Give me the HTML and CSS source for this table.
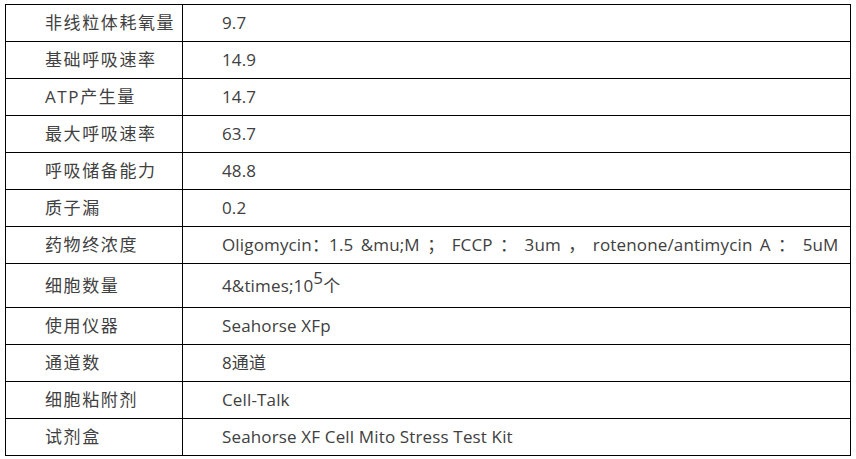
FILE: index.html
```html
<!DOCTYPE html>
<html>
<head>
<meta charset="utf-8">
<link rel="stylesheet" href="styles.css">
</head>
<body>
<table class="data">
<tr><td class="k">非线粒体耗氧量</td><td class="v">9.7</td></tr>
<tr><td class="k">基础呼吸速率</td><td class="v">14.9</td></tr>
<tr><td class="k">ATP产生量</td><td class="v">14.7</td></tr>
<tr><td class="k">最大呼吸速率</td><td class="v">63.7</td></tr>
<tr><td class="k">呼吸储备能力</td><td class="v">48.8</td></tr>
<tr><td class="k">质子漏</td><td class="v">0.2</td></tr>
<tr><td class="k">药物终浓度</td><td class="v wide">Oligomycin：1.5 &amp;mu;M ； FCCP ： 3um ， rotenone/antimycin A ： 5uM</td></tr>
<tr class="tall"><td class="k">细胞数量</td><td class="v">4&amp;times;10<sup>5</sup>个</td></tr>
<tr><td class="k">使用仪器</td><td class="v">Seahorse XFp</td></tr>
<tr><td class="k">通道数</td><td class="v">8通道</td></tr>
<tr><td class="k">细胞粘附剂</td><td class="v">Cell-Talk</td></tr>
<tr><td class="k">试剂盒</td><td class="v">Seahorse XF Cell Mito Stress Test Kit</td></tr>
</table>
</body>
</html>
```
FILE: styles.css
```css
html, body {
  margin: 0;
  padding: 0;
  background: #fff;
}
body {
  padding: 4px 5px;
  font-family: "Open Sans", "Noto Sans CJK SC", sans-serif;
  font-size: 17px;
  color: #404040;
}
.data {
  border-collapse: collapse;
  width: 846px;
}
.data td {
  border: 1px solid #000;
  height: 36px;
  padding: 0 0 0 39px;
  vertical-align: middle;
  white-space: nowrap;
  line-height: 20px;
}
.data td.k {
  width: 137px;
  letter-spacing: 1.6px;
}
.data td.v {
  letter-spacing: 0.15px;
}
.data td.wide {
  word-spacing: 2.8px;
}
.data tr.tall td {
  height: 43px;
}
sup {
  font-size: 17px;
  line-height: 0;
  position: relative;
  top: -1px;
}
```
